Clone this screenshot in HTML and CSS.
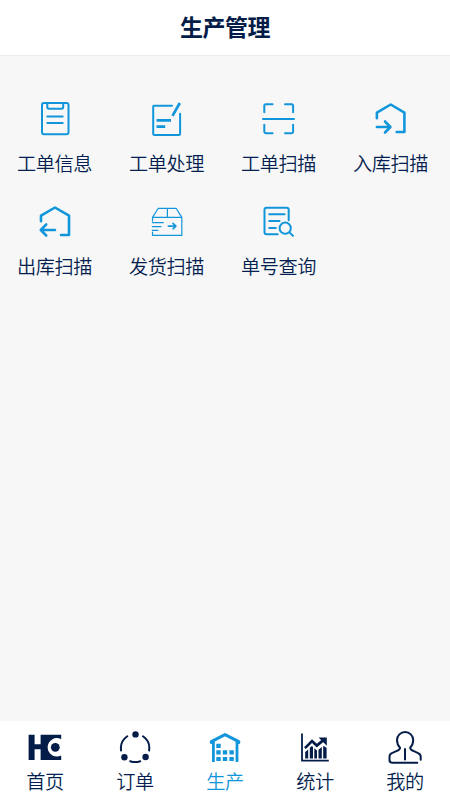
FILE: index.html
```html
<!DOCTYPE html>
<html lang="zh-CN">
<head>
<meta charset="utf-8">
<title>生产管理</title>
<link rel="stylesheet" href="styles.css">
</head>
<body>
<header class="header"><h1>生产管理</h1></header>
<main class="menu">
  <a class="item"><svg class="icon" viewBox="0 0 40 40"><rect x="7" y="4" width="26.5" height="31.3" rx="2"/><path d="M12.3 4v4q0 1.7 1.7 1.7h12.5q1.7 0 1.7-1.7V4M12.3 17.5h15.4M12.3 24h15.4"/></svg><span>工单信息</span></a>
  <a class="item"><svg class="icon" viewBox="0 0 40 40"><path d="M25 6.8H7q-.8 0-.8.8v27.5q0 .8.8.8h25.3q.8 0 .8-.8V14.8"/><path class="thick" d="M9.5 21.4h14.5M9.5 27.6h8.7M32.8 4l-7.3 12.8"/></svg><span>工单处理</span></a>
  <a class="item"><svg class="icon" viewBox="0 0 40 40"><path d="M5.3 13.3V6.7q0-1.5 1.5-1.5h6.8M26 5.2h6.6q1.5 0 1.5 1.5v6.6M5.3 25.8v7q0 1.4 1.5 1.4h6.8M26 34.2h6.6q1.5 0 1.5-1.4v-7M4 20h31"/></svg><span>工单扫描</span></a>
  <a class="item"><svg class="icon bold" viewBox="0 0 40 40"><path d="M5.9 19.3v-5.6l13.8-8.2 13.7 8.2V33h-7.7M5.9 28H19M14 22.5l5.4 5.5-5.4 5.5"/></svg><span>入库扫描</span></a>
  <a class="item"><svg class="icon bold" viewBox="0 0 40 40"><path d="M6 19.3v-5.6L20 5.5l14 8.2V33h-8M20 28H5.8M11.2 22.5L5.8 28l5.4 5.5"/></svg><span>出库扫描</span></a>
  <a class="item"><svg class="icon fine" viewBox="0 0 40 40"><path d="M5.5 19v-3.6l5.8-9.1h17.8l5.7 9.1v18H5.5V30M5.5 15.4h29.3M20.4 6.3v9.1M5.3 20.6h11M5.3 24.6H14M5.3 28.4h5.5"/><path class="medium" d="M21.3 24.1h7.4M26 21.4l2.9 2.7-2.9 2.7"/></svg><span>发货扫描</span></a>
  <a class="item"><svg class="icon" viewBox="0 0 40 40"><path d="M18.7 32.3H7.5q-2 0-2-2V7.7q0-2 2-2h20.2q2 0 2 2v10.5M10.2 12.3H25.6M10.2 19H20.5M10.2 26.1h6.6M30.4 30.4l3.5 3.4"/><circle cx="26.2" cy="26.2" r="5.6"/></svg><span>单号查询</span></a>
</main>
<nav class="tabs">
  <a class="tab"><svg class="icon" viewBox="0 0 40 40"><path class="solid" d="M3.6 6.7h6v9.6h6V6.7h20.6v4.5A9.2 9.2 0 1 0 36.2 27.4V32H15.6V21.3h-6V32h-6z"/><circle class="solid" cx="30.3" cy="19.3" r="4.4"/></svg><span>首页</span></a>
  <a class="tab"><svg class="icon" viewBox="0 0 40 40"><path d="M12.3 8.2A14.7 14.7 0 0 0 6.1 22.5M28 8.2a14.7 14.7 0 0 1 6.1 14.3M15.2 33.2q5.2 1.8 10 0"/><circle class="solid" cx="20.5" cy="6.4" r="3.2"/><circle class="solid" cx="9.4" cy="29.2" r="3.2"/><circle class="solid" cx="30.6" cy="29" r="3.2"/></svg><span>订单</span></a>
  <a class="tab active"><svg class="icon" viewBox="0 0 40 40"><path class="beam" d="M6.3 14.4v-.7L20 6.6l13.8 7.1v.7"/><path class="wall" d="M8.4 13v21M32 13v21"/><path class="solid" d="M11.3 15.8h4.4v4.2h-4.4zM11.3 22.3h4.4v4.2h-4.4zM17.8 22.3h4.4v4.2h-4.4zM24.4 22.3h4.4v4.2h-4.4zM11.3 28.9h4.4v4.2h-4.4zM17.8 28.9h4.4v4.2h-4.4zM24.4 28.9h4.4v4.2h-4.4z"/></svg><span>生产</span></a>
  <a class="tab"><svg class="icon" viewBox="0 0 40 40"><path class="axis" d="M7 5.5v27.2h26.8"/><path class="solid" d="M10.2 24l3-2.6v9h-3zM14.8 19.8l2.1-1.8 1.1 1v11.4h-3.2zM19.3 20.3l2.7 2.2v7.9h-2.7zM23.5 21.7l3.3-2.8v11.5h-3.3zM28.2 17.8l3.4 2v10.6h-3.4z"/><path class="trend" d="M10 20.1l7-7 4.8 4.5 7.2-6"/><path class="solid" d="M23.6 9.6h8.2v8.2z"/></svg><span>统计</span></a>
  <a class="tab"><svg class="icon" viewBox="0 0 40 40"><path d="M32.3 34.8H7.2Q4.5 34.8 4.5 32v-3.3q0-2.5 2.4-3.6l5.5-2.4q2.8-1.1 2.6-3-3-3-3-7.6a8.1 8.1 0 0 1 16.2 0q0 4.6-3 7.6-.2 1.9 2.6 3l5.3 2.4q2.6 1.2 2.6 3.6v3M20 21v10.6"/></svg><span>我的</span></a>
</nav>
</body>
</html>
```

FILE: styles.css
```css
* { box-sizing: border-box; }
body {
  margin: 0;
  height: 800px;
  display: flex;
  flex-direction: column;
  background: #f7f7f7;
  color: #051f50;
  font-family: "Noto Sans CJK SC", sans-serif;
  font-weight: 350;
  font-size: 19.2px;
  letter-spacing: -0.45px;
  line-height: 28px;
}
.header {
  height: 56px;
  flex: none;
  background: #fff;
  border-bottom: 1px solid #ececec;
  text-align: center;
}
h1 {
  margin: 0;
  font-size: 23px;
  letter-spacing: -0.5px;
  font-weight: 700;
  line-height: 53px;
  color: #041c48;
}
.menu {
  flex: 1;
  display: grid;
  grid-template-columns: repeat(4, 112px);
  grid-auto-rows: 103px;
  margin-left: -1px;
  padding-top: 43px;
}
.item, .tab {
  display: flex;
  flex-direction: column;
  align-items: center;
}
.item span { margin: 10px 1px 0 0; }
.icon {
  width: 40px;
  height: 40px;
  flex: none;
  fill: none;
  stroke: #1296db;
  stroke-width: 2;
  stroke-linecap: round;
  stroke-linejoin: round;
}
.thick { stroke-width: 2.7; stroke-linecap: butt; }
.bold { stroke-width: 2.6; }
.fine { stroke-width: 1.2; }
.medium { stroke-width: 1.6; }
.tabs {
  height: 79px;
  flex: none;
  display: grid;
  grid-template-columns: repeat(5, 1fr);
  padding-top: 7px;
  background: #fff;
}
.tab span { margin-top: -1px; }
.tab .icon { stroke: #041c48; }
.tab .solid { fill: #041c48; stroke: none; }
.active { color: #1296db; }
.tab.active .icon { stroke: #1296db; }
.tab.active .solid { fill: #1296db; }
.beam { stroke-width: 3; }
.wall { stroke-width: 2.8; stroke-linecap: butt; }
.axis { stroke-width: 1.8; stroke-linecap: butt; }
.tab .trend { stroke-width: 2.7; stroke-linecap: butt; stroke-linejoin: miter; }
```
